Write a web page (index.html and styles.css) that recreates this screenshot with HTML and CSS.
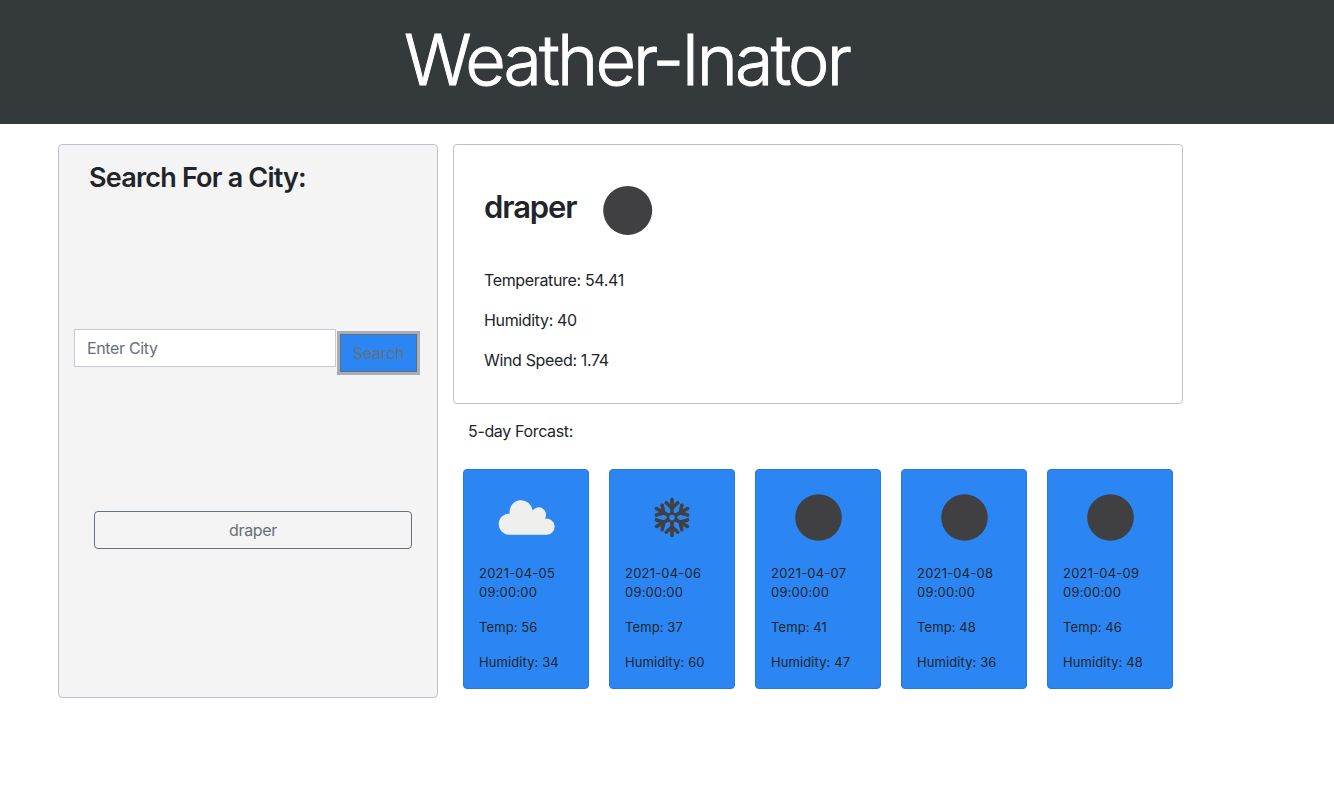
FILE: index.html
```html
<!DOCTYPE html>
<html lang="en">
<head>
<meta charset="utf-8">
<title>Weather-Inator</title>
<link rel="stylesheet" href="styles.css">
</head>
<body>
<header class="banner"><h1 class="title">Weather-Inator</h1></header>
<main class="layout">
  <aside class="search-panel">
    <h3 class="search-title">Search For a City:</h3>
    <form class="search-form">
      <input class="city-input" type="text" placeholder="Enter City">
      <button class="search-btn" type="button">Search</button>
    </form>
    <button class="history-btn" type="button">draper</button>
  </aside>
  <section class="content">
    <article class="current">
      <div class="current-head">
        <h2 class="city">draper</h2>
        <svg class="current-icon" viewBox="0 0 50 50"><circle cx="24.700" cy="25.400" r="24.500"/></svg>
      </div>
      <p class="stat">Temperature: 54.41</p>
      <p class="stat">Humidity: 40</p>
      <p class="stat">Wind Speed: 1.74</p>
    </article>
    <p class="forecast-title">5-day Forcast:</p>
    <div class="forecast">
      <article class="day">
        <svg class="icon cloud" viewBox="0 0 94 64"><path d="M29.700 49.700A10.500 10.500 0 0 1 30.800 28.600A11.500 11.500 0 1 1 53.600 25.700A7.200 7.200 0 0 1 65.900 33.700A8.100 8.100 0 1 1 66.800 49.700Z"/></svg>
        <p class="date">2021-04-05 09:00:00</p><p>Temp: 56</p><p>Humidity: 34</p>
      </article>
      <article class="day">
        <svg class="icon flake" viewBox="0 0 94 64">
          <defs><path id="arm" d="M0-5.200V-17.900M0-9.300L-5.700-14.700M0-9.300L5.700-14.700"/></defs>
          <g transform="translate(47 32.500)">
            <path class="hub" d="M0-4.600L4-2.300V2.300L0 4.600L-4 2.300V-2.300Z"/>
            <use href="#arm"/><use href="#arm" transform="rotate(60)"/><use href="#arm" transform="rotate(120)"/>
            <use href="#arm" transform="rotate(180)"/><use href="#arm" transform="rotate(240)"/><use href="#arm" transform="rotate(300)"/>
          </g>
        </svg>
        <p class="date">2021-04-06 09:00:00</p><p>Temp: 37</p><p>Humidity: 60</p>
      </article>
      <article class="day">
        <svg class="icon" viewBox="0 0 94 64"><circle cx="47.500" cy="32.500" r="23.300"/></svg>
        <p class="date">2021-04-07 09:00:00</p><p>Temp: 41</p><p>Humidity: 47</p>
      </article>
      <article class="day">
        <svg class="icon" viewBox="0 0 94 64"><circle cx="47.500" cy="32.500" r="23.300"/></svg>
        <p class="date">2021-04-08 09:00:00</p><p>Temp: 48</p><p>Humidity: 36</p>
      </article>
      <article class="day">
        <svg class="icon" viewBox="0 0 94 64"><circle cx="47.500" cy="32.500" r="23.300"/></svg>
        <p class="date">2021-04-09 09:00:00</p><p>Temp: 46</p><p>Humidity: 48</p>
      </article>
    </div>
  </section>
</main>
</body>
</html>
```
FILE: styles.css
```css
* { box-sizing: border-box; }
body {
  margin: 0;
  background: #fff;
  color: #212529;
  font: 400 16px/24px Inter, "Liberation Sans", sans-serif;
  letter-spacing: -0.35px;
}
h1, h2, h3, p { margin: 0; }
.banner { height: 124px; padding: 16px 0 0 404px; background: #343a3c; color: #fff; }
.title { font-size: 70px; line-height: 88px; font-weight: 300; letter-spacing: -2.9px; white-space: nowrap; -webkit-text-stroke: 0.9px #fff; }
.layout { display: flex; align-items: flex-start; gap: 15px; padding: 20px 0 0 58px; }
.search-panel {
  width: 380px;
  height: 554px;
  padding: 15px;
  background: #f4f4f4;
  border: 1px solid #bfc0ce;
  border-radius: 4px;
}
.search-title { padding: 1px 0 0 15px; font-size: 27px; line-height: 34px; font-weight: 600; letter-spacing: -0.8px; }
.search-form { display: flex; margin-top: 134px; }
.city-input {
  width: 262px;
  height: 38px;
  padding: 0 12px;
  border: 1px solid #c5cad3;
  background: #fff;
  font: inherit;
  letter-spacing: inherit;
}
.city-input::placeholder { color: #65707a; opacity: 1; }
.search-btn {
  width: 77px;
  height: 38px;
  margin: 5px 0 0 4px;
  padding: 0;
  border: 1px solid #5f6d7c;
  background: #2b86f3;
  color: #65707a;
  box-shadow: 0 0 0 3px #a9adb5;
  font: inherit;
  letter-spacing: -0.3px;
}
.history-btn {
  display: block;
  width: 318px;
  height: 38px;
  margin: 139px 0 0 20px;
  border: 1px solid #65707a;
  border-radius: 4px;
  background: transparent;
  color: #65707a;
  font: inherit;
  letter-spacing: inherit;
}
.content { width: 730px; }
.current { height: 260px; padding: 30px; border: 1px solid #bfc0ce; border-radius: 4px; }
.current-head { display: flex; align-items: flex-start; height: 93px; gap: 26px; }
.city { padding-top: 13px; font-size: 31px; line-height: 38px; font-weight: 600; letter-spacing: -1.1px; }
.current-icon { width: 50px; height: 50px; margin-top: 10px; fill: #404042; }
.stat { margin-bottom: 16px; }
.forecast-title { padding: 15px 15px 0; }
.forecast { display: flex; gap: 20px; padding: 26px 10px 0; }
.day {
  width: 126px;
  height: 220px;
  padding: 15px;
  border: 1px solid #2878d8;
  border-radius: 4px;
  background: #2b86f3;
  font-size: 13px;
  line-height: 19px;
  letter-spacing: 0.1px;
}
.day p { margin-bottom: 16px; }
.day .date { letter-spacing: 0.2px; }
.icon { display: block; width: 94px; height: 64px; margin-bottom: 15px; fill: #404042; }
.cloud { fill: #efefed; }
.flake { fill: none; stroke: #404042; stroke-width: 3.600; stroke-linecap: round; }
.hub { stroke-width: 2.600; }
```
